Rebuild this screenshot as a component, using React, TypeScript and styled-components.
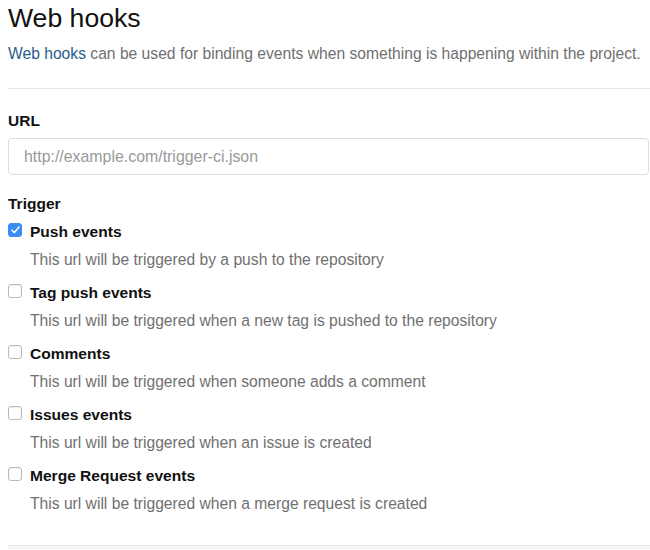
import styled, { createGlobalStyle } from "styled-components";

const GlobalStyle = createGlobalStyle`
  html, body {
    margin: 0;
    padding: 0;
    background: #fff;
  }
  body {
    font-family: "Liberation Sans", Arial, sans-serif;
    color: #000;
    overflow: hidden;
  }
`;

const Page = styled.div`
  padding-left: 8px;
`;

const Title = styled.h3`
  margin: 3px 0 0;
  font-size: 26.6px;
  line-height: 30px;
  font-weight: 400;
  color: #111;
`;

const Intro = styled.p`
  margin: 11px 0 0;
  font-size: 15.65px;
  line-height: 20px;
  color: #707070;
  white-space: nowrap;
`;

const Link = styled.a`
  color: #2b5b8e;
  text-decoration: none;
`;

const Divider = styled.hr`
  margin: 24px 0 0;
  border: 0;
  border-top: 1px solid #e8e8e8;
  height: 0;
`;

const FieldLabel = styled.label<{ gap: number }>`
  display: block;
  margin-top: ${(p) => p.gap}px;
  font-size: 15.5px;
  line-height: 20px;
  font-weight: 700;
  color: #111;
`;

const UrlInput = styled.input`
  display: block;
  box-sizing: border-box;
  width: calc(100% - 1px);
  height: 37px;
  margin-top: 7px;
  padding: 0 15px;
  border: 1px solid #dcdcdc;
  border-radius: 4px;
  font-family: inherit;
  font-size: 15.9px;
  color: #333;
  outline: none;

  &::placeholder {
    color: #999;
  }
`;

const TriggerList = styled.div`
  display: flex;
  flex-direction: column;
  gap: 13px;
  margin-top: 8px;
`;

const Trigger = styled.div`
  display: flex;
  flex-direction: column;
  gap: 8px;
`;

const CheckRow = styled.label`
  display: flex;
  align-items: flex-start;
  gap: 8px;
  font-size: 15.55px;
  line-height: 20px;
  font-weight: 700;
  color: #111;
`;

const Box = styled.span<{ checked: boolean }>`
  display: flex;
  align-items: center;
  justify-content: center;
  box-sizing: border-box;
  width: 14px;
  height: 14px;
  margin-top: 1px;
  border-radius: 3px;
  border: 1px solid ${(p) => (p.checked ? "#3b8cf3" : "#b9b9b9")};
  background: ${(p) => (p.checked ? "#3b8cf3" : "#fff")};
  box-shadow: ${(p) => (p.checked ? "none" : "inset 0 1px 1px rgba(0,0,0,0.06)")};
`;

const Hint = styled.div`
  padding-left: 22px;
  font-size: 15.65px;
  line-height: 20px;
  color: #707070;
  white-space: nowrap;
`;

const Actions = styled.div`
  margin-top: 31px;
  height: 5px;
  border-top: 1px solid #e5e5e5;
  background: #f5f5f5;
`;

const triggers = [
  { label: "Push events", hint: "This url will be triggered by a push to the repository", checked: true },
  { label: "Tag push events", hint: "This url will be triggered when a new tag is pushed to the repository", checked: false },
  { label: "Comments", hint: "This url will be triggered when someone adds a comment", checked: false },
  { label: "Issues events", hint: "This url will be triggered when an issue is created", checked: false },
  { label: "Merge Request events", hint: "This url will be triggered when a merge request is created", checked: false },
];

function App() {
  return (
    <Page>
      <GlobalStyle />
      <Title>Web hooks</Title>
      <Intro>
        <Link href="#">Web hooks</Link> can be used for binding events when something is happening within the project.
      </Intro>
      <Divider />
      <FieldLabel gap={22} htmlFor="hook-url">URL</FieldLabel>
      <UrlInput id="hook-url" placeholder="http://example.com/trigger-ci.json" />
      <FieldLabel gap={19}>Trigger</FieldLabel>
      <TriggerList>
        {triggers.map((t) => (
          <Trigger key={t.label}>
            <CheckRow>
              <Box checked={t.checked}>
                {t.checked && (
                  <svg width="9" height="8" viewBox="0 0 9 8">
                    <path d="M1 4.3 L3.4 6.6 L8 1" fill="none" stroke="#fff" strokeWidth="1.5" strokeLinecap="round" strokeLinejoin="round" />
                  </svg>
                )}
              </Box>
              {t.label}
            </CheckRow>
            <Hint>{t.hint}</Hint>
          </Trigger>
        ))}
      </TriggerList>
      <Actions />
    </Page>
  );
}

export default App;
